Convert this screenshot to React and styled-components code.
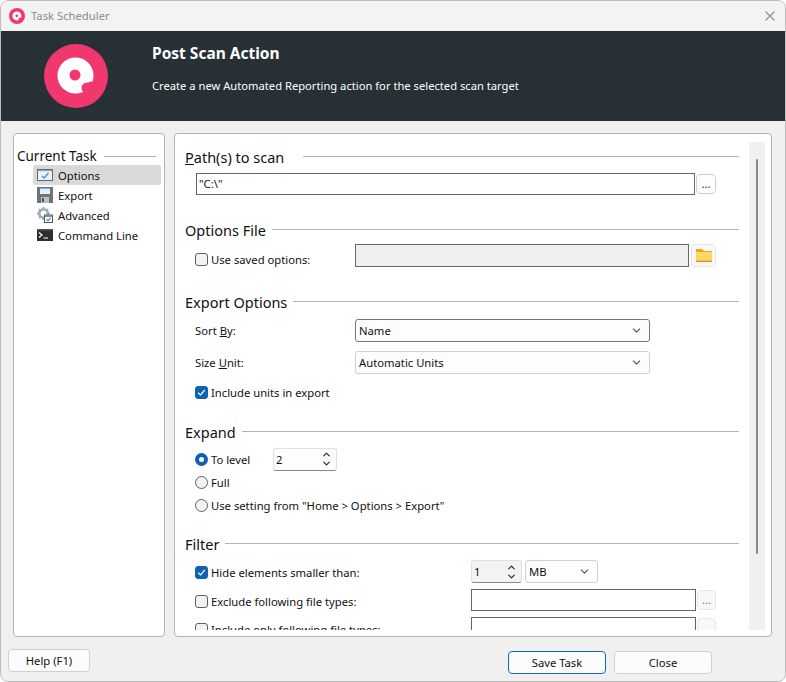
import React from "react"
import styled, { createGlobalStyle } from "styled-components"
import { LuChevronDown, LuChevronUp } from "react-icons/lu"

const GlobalStyle = createGlobalStyle`
  html, body {
    margin: 0;
    padding: 0;
    background: #fff;
  }
  body {
    font-family: "Noto Sans", "Open Sans", sans-serif;
    font-size: 11.25px;
    color: #111;
  }
`

const Window = styled.div`
  width: 786px;
  height: 682px;
  box-sizing: border-box;
  display: flex;
  flex-direction: column;
  background: #f0f0f0;
  border: 1px solid #bdbdbd;
  border-radius: 8px;
  overflow: hidden;
`

const TitleBar = styled.div`
  height: 30px;
  flex: none;
  display: flex;
  align-items: center;
  padding: 0 8px 1px;
  box-sizing: border-box;
  gap: 6px;
  color: #8b8b8b;
  background: #f3f3f3;
`

const CloseIcon = styled.svg`
  margin-left: auto;
  margin-right: 2px;
`

const Banner = styled.div`
  height: 90px;
  flex: none;
  background: #263035;
  display: flex;
  color: #fff;
`

const BannerLogo = styled.div`
  width: 151px;
  flex: none;
  padding: 13px 0 0 43px;
  box-sizing: border-box;
`

const BannerText = styled.div`
  padding-top: 11px;

  h1 {
    margin: 0;
    font-size: 15.5px;
    line-height: 22px;
    font-weight: 700;
  }

  p {
    margin: 14px 0 0;
    font-size: 11.2px;
    line-height: 16px;
  }
`

const Main = styled.div`
  flex: none;
  display: flex;
  gap: 9px;
  padding: 12px 13px 0 12px;
`

const Panel = styled.div`
  box-sizing: border-box;
  height: 504px;
  background: #fff;
  border: 1px solid #b4b4b4;
  border-radius: 4px;
`

const NavPanel = styled(Panel)`
  width: 152px;
  flex: none;
  padding: 13px 8px 0 3px;
`

const NavHeading = styled.div`
  display: flex;
  align-items: center;
  gap: 7px;
  height: 18px;
  font-size: 13.5px;

  &::after {
    content: "";
    flex: 1;
    height: 1px;
    background: #b4b4b4;
  }
`

const NavList = styled.div`
  margin: 0 0 0 16px;
  width: 128px;
`

const NavItem = styled.div`
  height: 20px;
  display: flex;
  align-items: center;
  gap: 5px;
  padding-left: 4px;
  border-radius: 3px;
  background: ${(p) => (p.$active ? "#d9d9d9" : "transparent")};
`

const FormPanel = styled(Panel)`
  flex: 1;
  min-width: 0;
  display: flex;
  padding: 8px 6px 6px 10px;
`

const FormBody = styled.div`
  flex: 1;
  min-width: 0;
  overflow: hidden;
`

const ScrollTrack = styled.div`
  width: 16px;
  flex: none;
  margin-left: 9px;
  background: #f0f0f0;
  padding-top: 17px;
  box-sizing: border-box;

  &::after {
    content: "";
    display: block;
    width: 2px;
    height: 395px;
    margin-left: 7px;
    background: #8a8a8a;
    border-radius: 1px;
  }
`

const SectionHead = styled.div`
  display: flex;
  align-items: center;
  gap: ${(p) => p.$gap || 6}px;
  height: 20px;
  margin-top: ${(p) => p.$top || 0}px;
  margin-right: 1px;
  font-size: 14.5px;

  &::after {
    content: "";
    flex: 1;
    height: 1px;
    margin-top: -2px;
    background: #b4b4b4;
  }
`

const Row = styled.div`
  display: flex;
  align-items: center;
  height: ${(p) => p.$height || 23}px;
  margin-top: ${(p) => p.$top || 0}px;
  padding-left: ${(p) => p.$indent ?? 10}px;
`

const Label = styled.span`
  width: ${(p) => p.$width}px;
  flex: none;
  white-space: nowrap;
`

const Check = styled.label`
  display: flex;
  align-items: center;
  gap: 3px;
  width: ${(p) => (p.$width ? `${p.$width}px` : "auto")};
  margin-top: ${(p) => p.$drop || 0}px;
  flex: none;
  white-space: nowrap;
`

const Box = styled.span`
  width: 13px;
  height: 13px;
  flex: none;
  box-sizing: border-box;
  border-radius: 3px;
  border: 1px solid ${(p) => (p.$on ? "#0f62b0" : "#5f5f5f")};
  background: ${(p) => (p.$on ? "#0f62b0" : "#f2f2f2")};
  display: flex;
  align-items: center;
  justify-content: center;
`

const Radio = styled.span`
  width: 13px;
  height: 13px;
  flex: none;
  box-sizing: border-box;
  border-radius: 50%;
  border: ${(p) => (p.$on ? "4px solid #0f62b0" : "1px solid #5f5f5f")};
  background: ${(p) => (p.$on ? "#fff" : "#f2f2f2")};
`

const TextInput = styled.div`
  box-sizing: border-box;
  width: ${(p) => p.$width}px;
  height: ${(p) => p.$height || 22}px;
  flex: none;
  padding: 0 2px;
  line-height: 19px;
  border: 1px solid #666;
  background: ${(p) => (p.$disabled ? "#efefef" : "#fff")};
`

const MiniButton = styled.div`
  box-sizing: border-box;
  width: ${(p) => p.$width || 20}px;
  height: ${(p) => p.$height || 20}px;
  flex: none;
  margin-left: ${(p) => p.$left || 1}px;
  display: flex;
  align-items: center;
  justify-content: center;
  border: 1px solid ${(p) => (p.$muted ? "#e6e6e6" : "#cfcfcf")};
  border-radius: 4px;
  background: ${(p) => (p.$muted ? "#f8f8f8" : "#fdfdfd")};
  color: ${(p) => (p.$muted ? "#777" : "#222")};
  line-height: 1;
`

const Select = styled.div`
  box-sizing: border-box;
  width: ${(p) => p.$width}px;
  height: 23px;
  flex: none;
  display: flex;
  align-items: center;
  justify-content: space-between;
  padding: 0 6px 0 3px;
  margin-left: ${(p) => p.$left || 0}px;
  border: 1px solid ${(p) => (p.$dark ? "#777" : "#d0d0d0")};
  border-radius: 3px;
  background: #fdfdfd;
  color: #111;

  svg {
    color: #555;
  }
`

const Spin = styled.div`
  box-sizing: border-box;
  width: ${(p) => p.$width}px;
  height: 23px;
  flex: none;
  display: flex;
  align-items: center;
  justify-content: space-between;
  padding: 0 4px 0 2px;
  margin-left: ${(p) => p.$left || 0}px;
  border: 1px solid #e0e0e0;
  border-bottom-color: #8a8a8a;
  border-radius: 3px;
  background: ${(p) => (p.$grey ? "#f3f3f3" : "#fdfdfd")};
`

const Arrows = styled.span`
  display: flex;
  flex-direction: column;
  color: #222;

  svg + svg {
    margin-top: -2px;
  }
`

const Footer = styled.div`
  display: flex;
  align-items: flex-start;
  padding: 12px 73px 0 7px;
`

const Button = styled.div`
  box-sizing: border-box;
  width: ${(p) => p.$width}px;
  height: 23px;
  display: flex;
  align-items: center;
  justify-content: center;
  margin-left: ${(p) => p.$left || 0}px;
  margin-top: ${(p) => p.$top || 0}px;
  border: 1px solid ${(p) => (p.$primary ? "#0f6cbd" : "#d0d0d0")};
  border-radius: 4px;
  background: #fcfcfc;
`

const Logo = ({ size }) => (
  <svg width={size} height={size} viewBox="0 0 64 64">
    <circle cx="32" cy="32" r="32" fill="#f0386f" />
    <circle cx="31.5" cy="31.5" r="18" fill="#fff" />
    <circle cx="31" cy="31" r="5.5" fill="#f0386f" />
    <circle cx="43" cy="44" r="5.5" fill="#f0386f" />
    <circle cx="47" cy="41" r="3.5" fill="#f0386f" />
  </svg>
)

const OptionsIcon = () => (
  <svg width="16" height="12" viewBox="0 0 16 12">
    <rect x="0.5" y="0.5" width="15" height="11" fill="#eef2f6" stroke="#666" />
    <rect x="1" y="1" width="14" height="1.2" fill="#9aa4ad" />
    <path d="M5 7 L7.2 9 L11.5 4" fill="none" stroke="#3b97dc" strokeWidth="1.4" />
  </svg>
)

const FloppyIcon = () => (
  <svg width="16" height="16" viewBox="0 0 16 16">
    <path d="M0 0 H16 V16 H0 Z" fill="#6d7478" />
    <rect x="3" y="0" width="10" height="7" fill="#e8eef3" />
    <rect x="3" y="0" width="10" height="1.6" fill="#3d83c6" />
    <rect x="4" y="10" width="8" height="6" fill="#b9bfc3" />
    <rect x="5" y="11" width="2" height="4" fill="#555" />
  </svg>
)

const AdvancedIcon = () => (
  <svg width="16" height="16" viewBox="0 0 16 16">
    <circle cx="6.5" cy="6.5" r="4.2" fill="none" stroke="#a3acb3" strokeWidth="2.6" />
    <path
      d="M6.5 0 V2.5 M6.5 10.5 V13 M0 6.5 H2.5 M10.5 6.5 H13 M2 2 L3.7 3.7 M9.3 9.3 L11 11 M11 2 L9.3 3.7 M3.7 9.3 L2 11"
      stroke="#a3acb3"
      strokeWidth="2"
    />
    <rect x="7.5" y="8" width="8" height="7.5" fill="#fff" stroke="#555" />
    <rect x="8" y="8.5" width="7" height="1.3" fill="#777" />
    <path d="M9.5 12.3 L11 13.6 L13.6 10.8" fill="none" stroke="#2f8fdc" strokeWidth="1.2" />
  </svg>
)

const TerminalIcon = () => (
  <svg width="16" height="12" viewBox="0 0 16 12">
    <rect width="16" height="12" fill="#2f2f2f" />
    <rect width="16" height="1.5" fill="#555" />
    <path d="M2 3.5 L5 6 L2 8.5" fill="none" stroke="#fff" strokeWidth="1.2" />
    <path d="M6.5 9 H11" stroke="#fff" strokeWidth="1.2" />
  </svg>
)

const FolderIcon = () => (
  <svg width="16" height="13" viewBox="0 0 16 13">
    <path d="M0 0 H6 L8 2 H16 V13 H0 Z" fill="#f2a900" />
    <rect x="0" y="3" width="16" height="9" fill="#fbd768" />
    <rect x="0" y="11.6" width="16" height="1.4" fill="#d99a1c" />
  </svg>
)

const Tick = () => (
  <svg width="9" height="9" viewBox="0 0 9 9">
    <path d="M1.2 4.8 L3.5 7 L7.8 2" fill="none" stroke="#fff" strokeWidth="1.2" />
  </svg>
)

const SpinArrows = () => (
  <Arrows>
    <LuChevronUp size={11} strokeWidth={2.4} />
    <LuChevronDown size={11} strokeWidth={2.4} />
  </Arrows>
)

const navItems = [
  { label: "Options", icon: <OptionsIcon />, active: true },
  { label: "Export", icon: <FloppyIcon /> },
  { label: "Advanced", icon: <AdvancedIcon /> },
  { label: "Command Line", icon: <TerminalIcon /> },
]

const App = () => (
  <>
    <GlobalStyle />
    <Window>
      <TitleBar>
        <Logo size={16} />
        Task Scheduler
        <CloseIcon width="10" height="10" viewBox="0 0 10 10">
          <path d="M0.5 0.5 L9.5 9.5 M9.5 0.5 L0.5 9.5" stroke="#8f8f8f" strokeWidth="1.1" />
        </CloseIcon>
      </TitleBar>
      <Banner>
        <BannerLogo>
          <Logo size={64} />
        </BannerLogo>
        <BannerText>
          <h1>Post Scan Action</h1>
          <p>Create a new Automated Reporting action for the selected scan target</p>
        </BannerText>
      </Banner>
      <Main>
        <NavPanel>
          <NavHeading>Current Task</NavHeading>
          <NavList>
            {navItems.map((item) => (
              <NavItem key={item.label} $active={item.active}>
                {item.icon}
                {item.label}
              </NavItem>
            ))}
          </NavList>
        </NavPanel>
        <FormPanel>
          <FormBody>
            <SectionHead $gap={19} $top={5}>
              <span>
                <u>P</u>ath(s) to scan
              </span>
            </SectionHead>
            <Row $top={5} $indent={11}>
              <TextInput $width={499}>"C:\"</TextInput>
              <MiniButton>...</MiniButton>
            </Row>
            <SectionHead $top={25}>Options File</SectionHead>
            <Row $top={4}>
              <Check $width={160} $drop={7}>
                <Box />
                Use saved options:
              </Check>
              <TextInput $width={334} $height={23} $disabled />
              <MiniButton $width={25} $height={23} $left={2} $muted>
                <FolderIcon />
              </MiniButton>
            </Row>
            <SectionHead $top={25}>Export Options</SectionHead>
            <Row $top={7}>
              <Label $width={160}>
                Sort <u>B</u>y:
              </Label>
              <Select $width={295} $dark>
                Name
                <LuChevronDown size={13} />
              </Select>
            </Row>
            <Row $top={9}>
              <Label $width={160}>
                Size <u>U</u>nit:
              </Label>
              <Select $width={295}>
                Automatic Units
                <LuChevronDown size={13} />
              </Select>
            </Row>
            <Row $top={7}>
              <Check>
                <Box $on>
                  <Tick />
                </Box>
                Include units in export
              </Check>
            </Row>
            <SectionHead $top={18}>Expand</SectionHead>
            <Row $top={5} $height={24}>
              <Check $width={78}>
                <Radio $on />
                To level
              </Check>
              <Spin $width={64}>
                2
                <SpinArrows />
              </Spin>
            </Row>
            <Row>
              <Check>
                <Radio />
                Full
              </Check>
            </Row>
            <Row>
              <Check>
                <Radio />
                Use setting from "Home &gt; Options &gt; Export"
              </Check>
            </Row>
            <SectionHead $top={17}>Filter</SectionHead>
            <Row $top={6}>
              <Check $width={276} $drop={2}>
                <Box $on>
                  <Tick />
                </Box>
                Hide elements smaller than:
              </Check>
              <Spin $width={51} $grey>
                1
                <SpinArrows />
              </Spin>
              <Select $width={73} $left={3}>
                MB
                <LuChevronDown size={13} />
              </Select>
            </Row>
            <Row $top={6} $height={22}>
              <Check $width={276} $drop={2}>
                <Box />
                Exclude following file types:
              </Check>
              <TextInput $width={225} />
              <MiniButton $muted $width={19}>...</MiniButton>
            </Row>
            <Row $top={6} $height={22}>
              <Check $width={276} $drop={2}>
                <Box />
                Include only following file types:
              </Check>
              <TextInput $width={225} />
              <MiniButton $muted $width={19} />
            </Row>
          </FormBody>
          <ScrollTrack />
        </FormPanel>
      </Main>
      <Footer>
        <Button $width={82}>Help (F1)</Button>
        <Button $width={98} $left={418} $top={2} $primary>
          Save Task
        </Button>
        <Button $width={98} $left={8} $top={2}>
          Close
        </Button>
      </Footer>
    </Window>
  </>
)

export default App
